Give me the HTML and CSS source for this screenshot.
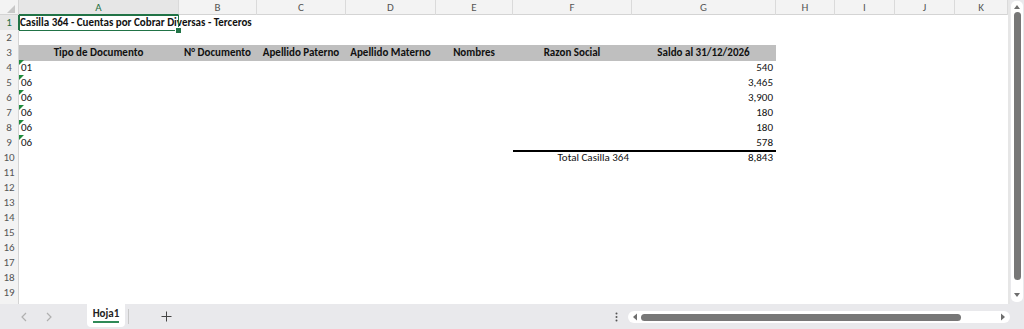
FILE: index.html
```html
<!DOCTYPE html>
<html lang="es">
<head>
<meta charset="utf-8">
<title>Hoja1</title>
<link rel="stylesheet" href="styles.css">
</head>
<body>
<div class="app">
  <div class="main">
    <div class="sheet">
      <div class="row colhead">
        <div class="corner"><svg width="10" height="10" viewBox="0 0 10 10"><path d="M9 1 L9 9 L1 9 Z" fill="#c8c8c8"/></svg></div>
        <div class="ch sel">A</div><div class="ch">B</div><div class="ch">C</div><div class="ch">D</div><div class="ch">E</div><div class="ch">F</div><div class="ch">G</div><div class="ch">H</div><div class="ch">I</div><div class="ch">J</div><div class="ch">K</div>
      </div>
      <div class="row">
        <div class="rh sel">1</div>
        <div class="c title active">Casilla 364 - Cuentas por Cobrar Diversas - Terceros</div>
      </div>
      <div class="row"><div class="rh">2</div></div>
      <div class="row">
        <div class="rh">3</div>
        <div class="c hd">Tipo de Documento</div>
        <div class="c hd">N° Documento</div>
        <div class="c hd">Apellido Paterno</div>
        <div class="c hd">Apellido Materno</div>
        <div class="c hd">Nombres</div>
        <div class="c hd">Razon Social</div>
        <div class="c hd">Saldo al 31/12/2026</div>
      </div>
      <div class="row">
        <div class="rh">4</div>
        <div class="c flag">01</div><div class="c"></div><div class="c"></div><div class="c"></div><div class="c"></div><div class="c"></div>
        <div class="c num">540</div>
      </div>
      <div class="row">
        <div class="rh">5</div>
        <div class="c flag">06</div><div class="c"></div><div class="c"></div><div class="c"></div><div class="c"></div><div class="c"></div>
        <div class="c num">3,465</div>
      </div>
      <div class="row">
        <div class="rh">6</div>
        <div class="c flag">06</div><div class="c"></div><div class="c"></div><div class="c"></div><div class="c"></div><div class="c"></div>
        <div class="c num">3,900</div>
      </div>
      <div class="row">
        <div class="rh">7</div>
        <div class="c flag">06</div><div class="c"></div><div class="c"></div><div class="c"></div><div class="c"></div><div class="c"></div>
        <div class="c num">180</div>
      </div>
      <div class="row">
        <div class="rh">8</div>
        <div class="c flag">06</div><div class="c"></div><div class="c"></div><div class="c"></div><div class="c"></div><div class="c"></div>
        <div class="c num">180</div>
      </div>
      <div class="row">
        <div class="rh">9</div>
        <div class="c flag">06</div><div class="c"></div><div class="c"></div><div class="c"></div><div class="c"></div>
        <div class="c rule"></div>
        <div class="c num rule">578</div>
      </div>
      <div class="row">
        <div class="rh">10</div>
        <div class="c"></div><div class="c"></div><div class="c"></div><div class="c"></div><div class="c"></div>
        <div class="c num">Total Casilla 364</div>
        <div class="c num">8,843</div>
      </div>
      <div class="row"><div class="rh">11</div></div>
      <div class="row"><div class="rh">12</div></div>
      <div class="row"><div class="rh">13</div></div>
      <div class="row"><div class="rh">14</div></div>
      <div class="row"><div class="rh">15</div></div>
      <div class="row"><div class="rh">16</div></div>
      <div class="row"><div class="rh">17</div></div>
      <div class="row"><div class="rh">18</div></div>
      <div class="row"><div class="rh">19</div></div>
      <div class="row"><div class="rh"></div></div>
    </div>
    <div class="vscroll">
      <div class="vtrack">
        <svg class="varrow" width="8" height="6" viewBox="0 0 8 6"><path d="M4 1 L7 5 L1 5 Z" fill="#6e6e6e"/></svg>
        <div class="vthumb"></div>
        <svg class="varrow" width="8" height="6" viewBox="0 0 8 6"><path d="M1 1 L7 1 L4 5 Z" fill="#6e6e6e"/></svg>
      </div>
    </div>
  </div>
  <div class="tabbar">
    <div class="nav">
      <svg width="8" height="10" viewBox="0 0 8 10"><path d="M6 1 L2 5 L6 9" fill="none" stroke="#b0b0b0" stroke-width="1.2"/></svg>
      <svg width="8" height="10" viewBox="0 0 8 10"><path d="M2 1 L6 5 L2 9" fill="none" stroke="#b0b0b0" stroke-width="1.2"/></svg>
    </div>
    <div class="tab"><span class="tabname">Hoja1</span></div>
    <div class="tabsep"></div>
    <div class="add"><svg width="11" height="11" viewBox="0 0 11 11"><path d="M5.5 0.5 V10.5 M0.5 5.5 H10.5" stroke="#444" stroke-width="1"/></svg></div>
    <div class="spacer"></div>
    <div class="dots"><svg width="3" height="10" viewBox="0 0 3 10"><circle cx="1.5" cy="1.5" r="1" fill="#555"/><circle cx="1.5" cy="5" r="1" fill="#555"/><circle cx="1.5" cy="8.5" r="1" fill="#555"/></svg></div>
    <div class="htrack">
      <svg class="harrow" width="6" height="8" viewBox="0 0 6 8"><path d="M5 0.5 L5 7.5 L1 4 Z" fill="#6e6e6e"/></svg>
      <div class="hthumb"></div>
      <div class="hgap"></div>
      <svg class="harrow" width="6" height="8" viewBox="0 0 6 8"><path d="M1 0.5 L5 4 L1 7.5 Z" fill="#6e6e6e"/></svg>
    </div>
  </div>
</div>
</body>
</html>
```

FILE: styles.css
```css
* { box-sizing: border-box; }
html, body { margin: 0; padding: 0; }
body {
  width: 1024px;
  height: 329px;
  overflow: hidden;
  background: #ffffff;
  font-family: Carlito, Calibri, "Liberation Sans", Arial, sans-serif;
  font-size: 11px;
  color: #111;
}
.app {
  display: flex;
  flex-direction: column;
  width: 1024px;
  height: 329px;
}
.main {
  display: flex;
  height: 304px;
}
.sheet {
  width: 1010px;
  height: 304px;
  overflow: hidden;
  background: #fff;
  border-right: 2px solid #e6e6e6;
}
.row {
  display: grid;
  grid-template-columns: 19px 160px 78px 89px 90px 77px 119px 144px 59px 60px 60px 53px;
  height: 15px;
}
.colhead {
  background: #f3f3f3;
  border-bottom: 1px solid #d4d4d4;
}
.corner {
  display: flex;
  align-items: flex-end;
  justify-content: flex-end;
  padding: 0 2px 1px 0;
  border-right: 1px solid #d4d4d4;
}
.ch {
  text-align: center;
  padding-top: 1px;
  line-height: 13px;
  color: #555;
  font-size: 11px;
  border-right: 1px solid #dadada;
}
.ch.sel {
  background: #e6e6e6;
  color: #1e6e3f;
  border-bottom: 1px solid #217346;
}
.rh {
  grid-column: 1;
  background: #f3f3f3;
  border-right: 1px solid #d4d4d4;
  border-bottom: 1px solid #e4e4e4;
  text-align: center;
  padding-top: 1px;
  line-height: 14px;
  font-size: 11px;
  color: #555;
}
.rh.sel {
  background: #e6e6e6;
  color: #1e6e3f;
  border-right: 1px solid #217346;
}
.c {
  padding: 1px 3px 0 2px;
  line-height: 14px;
  white-space: nowrap;
  position: relative;
}
.title {
  font-weight: bold;
  overflow: visible;
  z-index: 1;
  padding-left: 1px;
}
.active::after {
  content: "";
  position: absolute;
  left: 0;
  top: 0;
  right: 0;
  bottom: 0;
  border: 1.5px solid #217346;
  pointer-events: none;
}
.active::before {
  content: "";
  position: absolute;
  right: -3px;
  bottom: -3px;
  width: 5px;
  height: 5px;
  background: #217346;
  border: 1px solid #fff;
  z-index: 2;
}
.hd {
  background: #bfbfbf;
  font-weight: bold;
  text-align: center;
}
.num { text-align: right; }
.flag::before {
  content: "";
  position: absolute;
  left: 0;
  top: 0;
  width: 0;
  height: 0;
  border-top: 5px solid #1e8a3c;
  border-right: 5px solid transparent;
}
.rule { border-bottom: 2px solid #000; }

.vscroll {
  width: 14px;
  height: 304px;
  background: #e9e9ec;
  padding: 1px 1px 2px 1px;
}
.vtrack {
  height: 100%;
  background: #fff;
  border-radius: 5px;
  display: flex;
  flex-direction: column;
  align-items: center;
  padding: 3px 0 4px;
}
.varrow { flex: none; }
.vthumb {
  width: 7px;
  margin: 2px 0 12px;
  height: 268px;
  background: #777;
  border-radius: 4px;
}
.tabbar {
  height: 25px;
  background: #e9e9ec;
  display: flex;
  align-items: flex-start;
}
.nav {
  display: flex;
  gap: 17px;
  padding: 8px 0 0 20px;
  width: 87px;
}
.tab {
  width: 38px;
  height: 23px;
  background: #fff;
  border-radius: 0 0 4px 4px;
  display: flex;
  justify-content: center;
  padding-top: 4px;
}
.tabname {
  font-size: 11px;
  font-weight: bold;
  color: #222;
  height: 15px;
  line-height: 12px;
  border-bottom: 2px solid #2f8a57;
}
.tabsep {
  width: 1px;
  height: 15px;
  margin: 5px 0 0 3px;
  background: #c8c8c8;
}
.add {
  padding: 7px 0 0 32px;
}
.spacer { flex: 1; }
.dots {
  padding: 8px 10px 0 0;
}
.htrack {
  width: 382px;
  height: 12px;
  margin-top: 7px;
  margin-right: 14px;
  background: #fff;
  border-radius: 6px;
  display: flex;
  align-items: center;
  padding: 0 4px 0 4px;
}
.harrow { flex: none; }
.hthumb {
  width: 320px;
  height: 7px;
  margin-left: 3px;
  background: #777;
  border-radius: 4px;
}
.hgap { flex: 1; }
```
